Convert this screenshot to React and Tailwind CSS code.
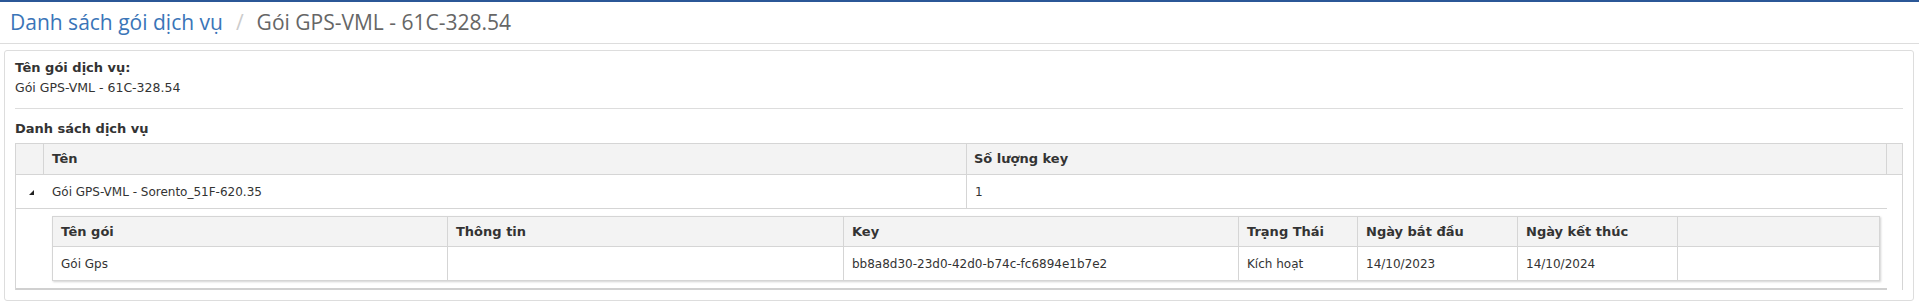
import React from 'react';

const services = [
  {
    name: 'Gói GPS-VML - Sorento_51F-620.35',
    keys: 1,
    packages: [
      {
        name: 'Gói Gps',
        info: '',
        key: 'bb8a8d30-23d0-42d0-b74c-fc6894e1b7e2',
        status: 'Kích hoạt',
        start: '14/10/2023',
        end: '14/10/2024',
      },
    ],
  },
];

const innerCols = 'grid grid-cols-[395px_396px_395px_119px_160px_160px_1fr]';

const ExpandIcon = () => (
  <svg width="5" height="5" viewBox="0 0 5 5" className="mt-[1px]">
    <polygon points="5,0 5,5 0,5" fill="#222" />
  </svg>
);

const PackageTable = ({ rows }) => (
  <div className="border border-[#d5d5d5] shadow-[1px_1px_2px_rgba(0,0,0,0.18)]">
    <div className={`${innerCols} h-[30px] bg-[#f3f3f3] border-b border-[#d5d5d5] font-bold text-[13px]`}>
      {['Tên gói', 'Thông tin', 'Key', 'Trạng Thái', 'Ngày bắt đầu', 'Ngày kết thúc', ''].map((h, i) => (
        <div key={i} className={`flex items-center px-[8px] ${i < 6 ? 'border-r border-[#d5d5d5]' : ''}`}>
          {h}
        </div>
      ))}
    </div>
    {rows.map((r) => (
      <div key={r.key} className={`${innerCols} h-[33px]`}>
        {[r.name, r.info, r.key, r.status, r.start, r.end, ''].map((v, i) => (
          <div key={i} className={`flex items-center px-[8px] ${i < 6 ? 'border-r border-[#d5d5d5]' : ''}`}>
            {v}
          </div>
        ))}
      </div>
    ))}
  </div>
);

export default function App() {
  return (
    <div className="min-h-screen bg-white border-t-2 border-[#2b5797] font-['DejaVu_Sans',Verdana,sans-serif] text-[12px] text-[#333]">
      <div className="h-[42px] flex items-center px-[10px] border-b border-[#ddd] font-['Open_Sans',sans-serif] text-[21px]">
        <span className="text-[#3a75b8]">Danh sách gói dịch vụ</span>
        <span className="text-[#ccc] mx-[13px]">/</span>
        <span className="text-[#666]">Gói GPS-VML - 61C-328.54</span>
      </div>

      <div className="mt-[6px] ml-[4px] mr-[5px] border border-[#ddd] rounded-[3px] px-[10px] pt-[7px] pb-[10px] leading-[20px]">
        <div className="font-bold text-[13px]">Tên gói dịch vụ:</div>
        <div className="text-[12.5px]">Gói GPS-VML - 61C-328.54</div>
        <div className="mt-[10px] border-t border-[#ddd]" />
        <div className="mt-[10px] font-bold text-[13px]">Danh sách dịch vụ</div>

        <div className="mt-[4px] border-t border-l border-r border-[#d5d5d5]">
          <div className="grid grid-cols-[28px_923px_920px_1fr] h-[31px] bg-[#f3f3f3] border-b border-[#d5d5d5] font-bold text-[13px]">
            <div className="border-r border-[#d5d5d5]" />
            <div className="flex items-center px-[8px] border-r border-[#d5d5d5]">Tên</div>
            <div className="flex items-center px-[7px] border-r border-[#d5d5d5]">Số lượng key</div>
            <div />
          </div>

          <div className="mr-[15px] border-b-2 border-[#d0d0d0]">
            {services.map((s) => (
              <div key={s.name}>
                <div className="grid grid-cols-[28px_923px_1fr] h-[34px] border-b border-[#d5d5d5]">
                  <div className="flex items-center justify-center pl-[3px]">
                    <ExpandIcon />
                  </div>
                  <div className="flex items-center px-[8px] border-r border-[#d5d5d5]">{s.name}</div>
                  <div className="flex items-center px-[8px]">{s.keys}</div>
                </div>
                <div className="flex">
                  <div className="w-[28px] shrink-0" />
                  <div className="flex-1 pl-[8px] pr-[7px] pt-[7px] pb-[7px]">
                    <PackageTable rows={s.packages} />
                  </div>
                </div>
              </div>
            ))}
          </div>
        </div>
      </div>
    </div>
  );
}
